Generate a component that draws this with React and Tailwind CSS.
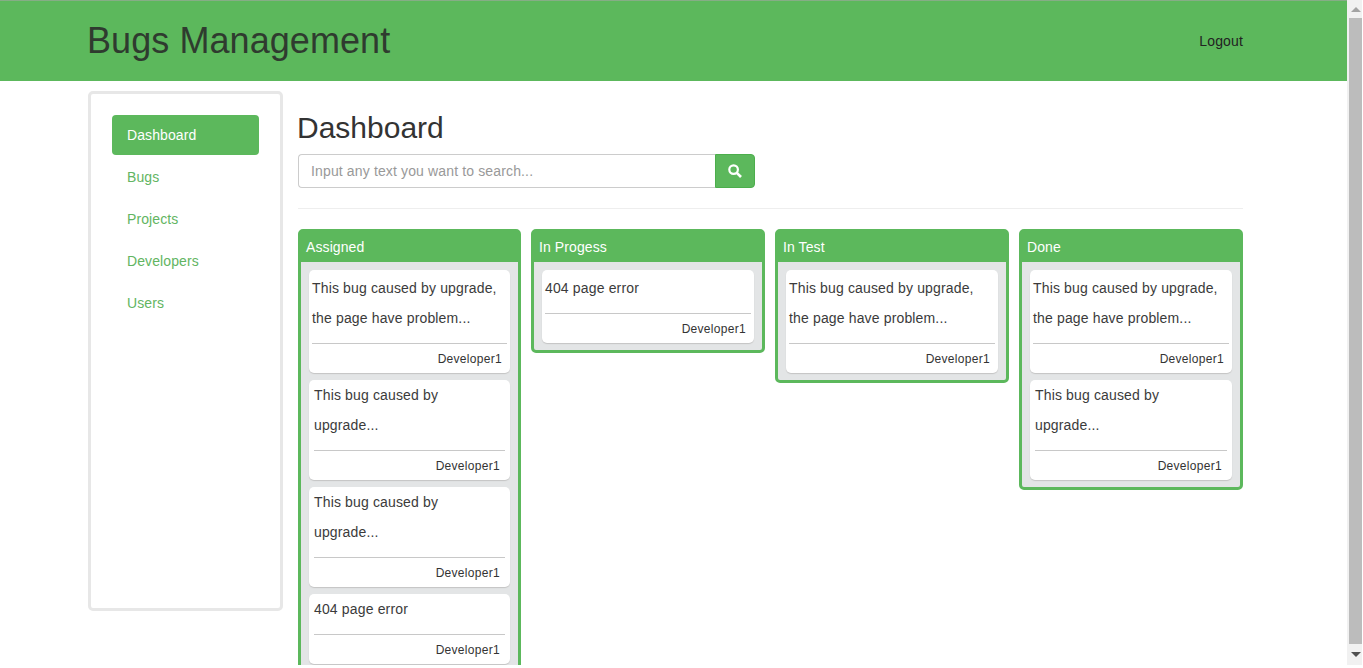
const NAV = ['Dashboard', 'Bugs', 'Projects', 'Developers', 'Users'];

const LONG = { lines: ['This bug caused by upgrade,', 'the page have problem...'], inset: true };
const SHORT = { lines: ['This bug caused by', 'upgrade...'] };
const ERROR = { lines: ['404 page error'] };
const ERROR_INSET = { lines: ['404 page error'], inset: true };

const COLUMNS = [
  { title: 'Assigned', width: 'w-[223px]', cards: [LONG, SHORT, SHORT, ERROR] },
  { title: 'In Progess', width: 'w-[234px]', cards: [ERROR_INSET] },
  { title: 'In Test', width: 'w-[234px]', cards: [LONG] },
  { title: 'Done', width: 'w-[224px]', cards: [LONG, SHORT] },
];

function BugCard({ card }) {
  return (
    <div className={`bg-white rounded-[5px] shadow-[0_1px_1px_#c4c4c4] ${card.inset ? 'pt-[3px] px-[3px]' : 'px-[5px]'}`}>
      <div className="text-[14px] leading-[30px] tracking-[0.15px] text-[#3b3b3b] whitespace-nowrap">
        {card.lines.map((line) => (
          <div key={line}>{line}</div>
        ))}
      </div>
      <div className="mt-[10px] border-t border-[#c8c8c8] h-[30px] pr-[5px] text-right text-[12px] leading-[30px] tracking-[0.3px] text-[#333]">
        Developer1
      </div>
    </div>
  );
}

function BugColumn({ column }) {
  return (
    <div className={`${column.width} shrink-0 self-start border-[3px] border-[#5cb85c] rounded-[5px] bg-[#e3e5e6]`}>
      <div className="h-[30px] bg-[#5cb85c] pl-[5px] text-[14px] leading-[30px] tracking-[0.1px] text-white">{column.title}</div>
      <div className="flex flex-col gap-[7px] pt-[8px] px-[8px] pb-[7px]">
        {column.cards.map((card, i) => (
          <BugCard key={i} card={card} />
        ))}
      </div>
    </div>
  );
}

function Scrollbar() {
  return (
    <div className="w-[15px] h-[665px] shrink-0 bg-[#f1f1f1] flex flex-col">
      <div className="h-[18px] flex items-center justify-center pl-[2px]">
        <div className="w-0 h-0 border-x-[5px] border-x-transparent border-b-[5px] border-b-[#a3a3a3]" />
      </div>
      <div className="w-[13px] flex-1 self-end bg-[#bcbcbc]" />
      <div className="h-[21px] flex items-center justify-center pl-[2px]">
        <div className="w-0 h-0 border-x-[5px] border-x-transparent border-t-[5px] border-t-[#505050]" />
      </div>
    </div>
  );
}

export default function App() {
  return (
    <div className="h-[668px] overflow-hidden flex bg-white font-['Liberation_Sans',Arial,sans-serif]">
      <div className="w-[1347px] h-[665px] shrink-0 overflow-hidden">
        <header className="h-[81px] bg-[#5cb85c] border-t border-[#86ad86] pl-[87px] pr-[104px] flex items-center justify-between">
          <h1 className="text-[36px] leading-[40px] tracking-[0.07px] text-[#2f3b2f]">Bugs Management</h1>
          <a className="text-[14px] tracking-[0.15px] text-[#222]">Logout</a>
        </header>

        <div className="flex gap-[15px] pl-[88px] pt-[10px]">
          <aside className="w-[195px] h-[520px] shrink-0 border-[3px] border-[#e7e7e7] rounded-[5px] p-[21px]">
            <nav className="flex flex-col gap-[2px]">
              {NAV.map((item, i) => (
                <a
                  key={item}
                  className={`h-[40px] rounded-[4px] pl-[15px] text-[14px] leading-[40px] tracking-[0.1px] ${i === 0 ? 'bg-[#5cb85c] text-white' : 'text-[#62b562]'}`}
                >
                  {item}
                </a>
              ))}
            </nav>
          </aside>

          <main className="w-[945px] shrink-0">
            <h2 className="mt-[20px] mb-[10px] -ml-px text-[30px] leading-[33px] text-[#333]">Dashboard</h2>
            <div className="flex h-[34px] w-[457px]">
              <input
                placeholder="Input any text you want to search..."
                className="w-[417px] border border-[#ccc] border-r-0 rounded-l-[4px] px-[12px] text-[14px] tracking-[0.14px] text-[#555] placeholder:text-[#999] outline-none"
              />
              <button className="w-[40px] bg-[#5cb85c] border border-[#4cae4c] rounded-r-[4px] flex items-center justify-center">
                <svg width="14" height="14" viewBox="0 0 14 14" fill="none" stroke="white">
                  <circle cx="5.6" cy="5.6" r="4.3" strokeWidth="2.2" />
                  <path d="M8.8 8.8L13 13" strokeWidth="2.6" />
                </svg>
              </button>
            </div>
            <hr className="mt-[20px] mb-[20px] border-t border-[#eee]" />
            <div className="flex gap-[10px] items-start">
              {COLUMNS.map((column) => (
                <BugColumn key={column.title} column={column} />
              ))}
            </div>
          </main>
        </div>
      </div>
      <Scrollbar />
    </div>
  );
}
